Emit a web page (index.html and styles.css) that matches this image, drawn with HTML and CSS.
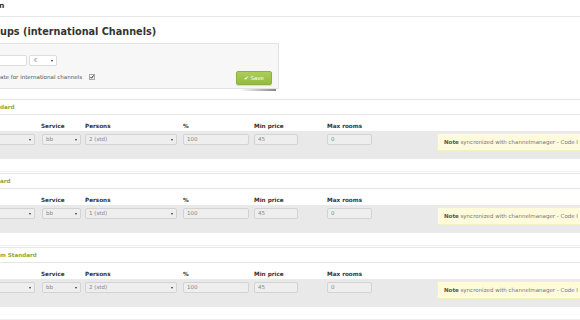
FILE: index.html
```html
<!DOCTYPE html>
<html lang="en">
<head>
<meta charset="utf-8">
<title>Rate groups (international Channels)</title>
<link rel="stylesheet" href="styles.css">
</head>
<body>
<div class="page">
  <div class="topbar"><span class="crumb">n</span></div>
  <h1 class="title">ups (international Channels)</h1>

  <div class="panel">
    <div class="panel-row">
      <div class="ctl white w-in"></div>
      <div class="ctl white sel w-cur"><span>€</span><i class="caret"></i></div>
    </div>
    <div class="panel-row2">
      <div class="intl"><span>ate for international channels</span>
        <span class="chk"><svg width="6" height="6" viewBox="0 0 6 6"><rect x="0.5" y="0.5" width="5" height="5" fill="#f0f0f0" stroke="#aaa" stroke-width="1"/><path d="M1.5 3 L2.6 4.2 L4.6 1.4" fill="none" stroke="#333" stroke-width="1"/></svg></span>
      </div>
      <button class="save">✔ Save</button>
    </div>
  </div>

  <section class="rate">
    <div class="rate-title">dard</div>
    <div class="grid labels"><span></span><span>Service</span><span>Persons</span><span>%</span><span>Min price</span><span>Max rooms</span></div>
    <div class="grid band">
      <div class="ctl sel c1 cut"><span></span><i class="caret"></i></div>
      <div class="ctl sel c2"><span>bb</span><i class="caret"></i></div>
      <div class="ctl sel c3"><span>2 (std)</span><i class="caret"></i></div>
      <div class="ctl c4">100</div>
      <div class="ctl c5">45</div>
      <div class="ctl c6">0</div>
      <div class="note"><b>Note</b> syncronized with channelmanager - Code I</div>
    </div>
  </section>

  <section class="rate">
    <div class="rate-title">ard</div>
    <div class="grid labels"><span></span><span>Service</span><span>Persons</span><span>%</span><span>Min price</span><span>Max rooms</span></div>
    <div class="grid band">
      <div class="ctl sel c1 cut"><span></span><i class="caret"></i></div>
      <div class="ctl sel c2"><span>bb</span><i class="caret"></i></div>
      <div class="ctl sel c3"><span>1 (std)</span><i class="caret"></i></div>
      <div class="ctl c4">100</div>
      <div class="ctl c5">45</div>
      <div class="ctl c6">0</div>
      <div class="note"><b>Note</b> syncronized with channelmanager - Code I</div>
    </div>
  </section>

  <section class="rate">
    <div class="rate-title">m Standard</div>
    <div class="grid labels"><span></span><span>Service</span><span>Persons</span><span>%</span><span>Min price</span><span>Max rooms</span></div>
    <div class="grid band">
      <div class="ctl sel c1 cut"><span></span><i class="caret"></i></div>
      <div class="ctl sel c2"><span>bb</span><i class="caret"></i></div>
      <div class="ctl sel c3"><span>2 (std)</span><i class="caret"></i></div>
      <div class="ctl c4">100</div>
      <div class="ctl c5">45</div>
      <div class="ctl c6">0</div>
      <div class="note"><b>Note</b> syncronized with channelmanager - Code I</div>
    </div>
  </section>
</div>
</body>
</html>
```

FILE: styles.css
```css
html, body {
  margin: 0;
  padding: 0;
  background: #fff;
  overflow: hidden;
}
body {
  font-family: "DejaVu Sans", Verdana, sans-serif;
  color: #444;
  width: 580px;
  height: 320px;
}
.page {
  width: 580px;
}
.topbar {
  height: 16px;
  border-bottom: 1px solid #e8e8e8;
  box-sizing: content-box;
}
.crumb {
  display: block;
  font-size: 7.5px;
  font-weight: bold;
  line-height: 11px;
  color: #333;
  margin-left: -1px;
}
.title {
  margin: 9px 0 5px;
  font-size: 9.7px;
  line-height: 12px;
  font-weight: bold;
  color: #333;
  white-space: nowrap;
}
.panel {
  position: relative;
  width: 279px;
  height: 46px;
  box-sizing: border-box;
  background: #f7f7f7;
  border: 1px solid #e2e2e2;
  border-left: none;
  padding: 11px 6px 3px 0;
  display: flex;
  flex-direction: column;
}
.panel::after {
  content: "";
  position: absolute;
  right: 2px;
  bottom: -3px;
  width: 36px;
  height: 2px;
  background: linear-gradient(to right, rgba(90,90,90,0), rgba(80,80,80,0.7));
  border-radius: 0 0 2px 30px;
}
.panel-row {
  display: flex;
  gap: 2px;
}
.panel-row2 {
  display: flex;
  justify-content: space-between;
  align-items: center;
  margin-top: 5px;
}
.intl {
  display: flex;
  align-items: center;
  gap: 7px;
  font-size: 5.55px;
  color: #555;
  margin-bottom: 2px;
  white-space: nowrap;
}
.chk {
  display: flex;
}
.save {
  width: 36px;
  height: 14px;
  padding: 0;
  border: 1px solid #8fb040;
  border-radius: 2px;
  background: linear-gradient(#acce58, #94bb3e);
  color: #fff;
  font-family: inherit;
  font-size: 5.5px;
  line-height: 12px;
  box-shadow: 0 1px 1px rgba(0,0,0,0.12);
}

/* controls */
.ctl {
  height: 11px;
  box-sizing: border-box;
  background: #eeeeee;
  border: 1px solid #d3d3d3;
  border-radius: 2px;
  font-size: 5.5px;
  line-height: 9px;
  color: #888;
  padding-left: 3px;
  white-space: nowrap;
}
.ctl.white {
  background: #fff;
  border-color: #dcdcdc;
}
.sel {
  display: flex;
  justify-content: space-between;
  align-items: center;
  padding-right: 3px;
}
.caret {
  width: 0;
  height: 0;
  border-left: 1.5px solid transparent;
  border-right: 1.5px solid transparent;
  border-top: 2px solid #333;
}
.w-in { width: 27px; border-left: none; border-radius: 0 2px 2px 0; }
.w-cur { width: 28px; padding-left: 4px; }
.cut { border-left: none; border-radius: 0 2px 2px 0; }

/* rate sections */
.rate {
  border-top: 1px solid #e6e6e6;
  border-bottom: 1px solid #eeeeee;
  margin-bottom: 1px;
}
.panel + .rate {
  margin-top: 10px;
}
.rate-title {
  height: 14px;
  line-height: 14px;
  font-size: 5.6px;
  font-weight: bold;
  color: #8fa542;
  border-bottom: 1px solid #e6e6e6;
  white-space: nowrap;
}
.grid {
  display: grid;
  grid-template-columns: 41px 44px 98px 71px 73px 110px 1fr;
}
.labels {
  height: 16px;
  box-sizing: border-box;
  padding-top: 7px;
  font-size: 5.7px;
  line-height: 8px;
  font-weight: bold;
  color: #333;
  white-space: nowrap;
}
.band {
  height: 28px;
  background: #e9e9e9;
  align-items: start;
  margin-bottom: 12px;
}
.band .ctl { margin-top: 3px; }
.c1 { width: 35px; }
.c2 { width: 39px; margin-left: 1px; }
.c3 { width: 92px; }
.c4 { width: 66px; }
.c5 { width: 44px; }
.c6 { width: 45px; }
.note {
  margin-top: 2px;
  height: 18px;
  box-sizing: border-box;
  background: #fdfbdc;
  border: 1px solid #f3efc6;
  border-right: none;
  padding-left: 6px;
  font-size: 5.5px;
  line-height: 16px;
  color: #777;
  white-space: nowrap;
  overflow: hidden;
}
.note b {
  color: #555;
}
```
